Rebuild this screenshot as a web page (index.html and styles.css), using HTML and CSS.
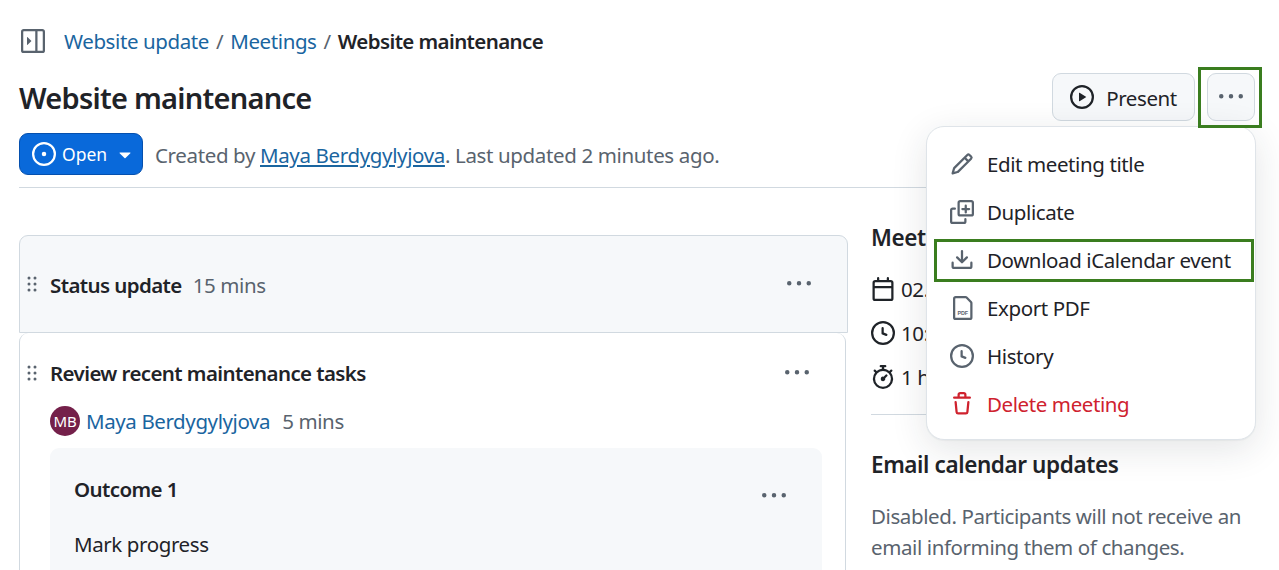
FILE: index.html
```html
<!DOCTYPE html>
<html lang="en">
<head>
  <meta charset="UTF-8">
  <title>Website maintenance</title>
  <link rel="stylesheet" href="styles.css">
</head>
<body>
  <svg class="sprites" width="0" height="0">
    <symbol id="i-sidebar" viewBox="0 0 16 16"><path d="M6.823 7.823a.25.25 0 0 1 0 .354l-2.396 2.396A.25.25 0 0 1 4 10.396V5.604a.25.25 0 0 1 .427-.177Z"/><path d="M1.75 0h12.5C15.216 0 16 .784 16 1.75v12.5A1.75 1.75 0 0 1 14.25 16H1.75A1.75 1.75 0 0 1 0 14.25V1.75C0 .784.784 0 1.75 0ZM1.5 1.75v12.5c0 .138.112.25.25.25H9.5v-13H1.75a.25.25 0 0 0-.25.25ZM11 14.5h3.25a.25.25 0 0 0 .25-.25V1.75a.25.25 0 0 0-.25-.25H11Z"/></symbol>
    <symbol id="i-open" viewBox="0 0 16 16"><path d="M8 9.5a1.5 1.5 0 1 0 0-3 1.5 1.5 0 0 0 0 3Z"/><path d="M8 0a8 8 0 1 1 0 16A8 8 0 0 1 8 0ZM1.5 8a6.5 6.5 0 1 0 13 0 6.5 6.5 0 0 0-13 0Z"/></symbol>
    <symbol id="i-caret" viewBox="0 0 16 16"><path d="m4.427 7.427 3.396 3.396a.25.25 0 0 0 .354 0l3.396-3.396A.25.25 0 0 0 11.396 7H4.604a.25.25 0 0 0-.177.427Z"/></symbol>
    <symbol id="i-play" viewBox="0 0 16 16"><path d="M8 0a8 8 0 1 1 0 16A8 8 0 0 1 8 0ZM1.5 8a6.5 6.5 0 1 0 13 0 6.5 6.5 0 0 0-13 0Zm4.879-2.773 4.264 2.559a.25.25 0 0 1 0 .428l-4.264 2.559A.25.25 0 0 1 6 10.559V5.442a.25.25 0 0 1 .379-.215Z"/></symbol>
    <symbol id="i-kebab" viewBox="0 0 16 16"><path d="M8 9a1.5 1.5 0 1 0 0-3 1.5 1.5 0 0 0 0 3ZM1.5 9a1.5 1.5 0 1 0 0-3 1.5 1.5 0 0 0 0 3Zm13 0a1.5 1.5 0 1 0 0-3 1.5 1.5 0 0 0 0 3Z"/></symbol>
    <symbol id="i-grab" viewBox="0 0 16 16"><path d="M10 13a1 1 0 1 1 0-2 1 1 0 0 1 0 2Zm0-4a1 1 0 1 1 0-2 1 1 0 0 1 0 2Zm-4 4a1 1 0 1 1 0-2 1 1 0 0 1 0 2Zm5-9a1 1 0 1 1-2 0 1 1 0 0 1 2 0ZM7 8a1 1 0 1 1-2 0 1 1 0 0 1 2 0ZM6 5a1 1 0 1 1 0-2 1 1 0 0 1 0 2Z"/></symbol>
    <symbol id="i-pencil" viewBox="0 0 16 16"><path d="M11.013 1.427a1.75 1.75 0 0 1 2.474 0l1.086 1.086a1.75 1.75 0 0 1 0 2.474l-8.61 8.61c-.21.21-.47.364-.756.445l-3.251.93a.75.75 0 0 1-.927-.928l.929-3.25c.081-.286.235-.547.445-.758l8.61-8.61Zm.176 4.823L9.75 4.81l-6.286 6.287a.253.253 0 0 0-.064.108l-.558 1.953 1.953-.558a.253.253 0 0 0 .108-.064Zm1.238-3.763a.25.25 0 0 0-.354 0L10.811 3.75l1.439 1.44 1.263-1.263a.25.25 0 0 0 0-.354Z"/></symbol>
    <symbol id="i-duplicate" viewBox="0 0 16 16"><path d="M0 6.75C0 5.784.784 5 1.75 5h1.5a.75.75 0 0 1 0 1.5h-1.5a.25.25 0 0 0-.25.25v7.5c0 .138.112.25.25.25h7.5a.25.25 0 0 0 .25-.25v-1.5a.75.75 0 0 1 1.5 0v1.5A1.75 1.75 0 0 1 9.25 16h-7.5A1.75 1.75 0 0 1 0 14.25Z"/><path d="M5 1.75C5 .784 5.784 0 6.75 0h7.5C15.216 0 16 .784 16 1.75v7.5A1.75 1.75 0 0 1 14.25 11h-7.5A1.75 1.75 0 0 1 5 9.25Zm1.75-.25a.25.25 0 0 0-.25.25v7.5c0 .138.112.25.25.25h7.5a.25.25 0 0 0 .25-.25v-7.5a.25.25 0 0 0-.25-.25Z"/><path d="M10.5 3a.75.75 0 0 1 .75.75v1.5h1.5a.75.75 0 0 1 0 1.5h-1.5v1.5a.75.75 0 0 1-1.5 0v-1.5h-1.5a.75.75 0 0 1 0-1.5h1.5v-1.5A.75.75 0 0 1 10.5 3Z"/></symbol>
    <symbol id="i-download" viewBox="0 0 16 16"><path d="M2.75 14A1.75 1.75 0 0 1 1 12.25v-2.5a.75.75 0 0 1 1.5 0v2.5c0 .138.112.25.25.25h10.5a.25.25 0 0 0 .25-.25v-2.5a.75.75 0 0 1 1.5 0v2.5A1.75 1.75 0 0 1 13.25 14Z"/><path d="M7.25 7.689V2a.75.75 0 0 1 1.5 0v5.689l1.97-1.969a.749.749 0 1 1 1.06 1.06l-3.25 3.25a.749.749 0 0 1-1.06 0L4.22 6.78a.749.749 0 1 1 1.06-1.06l1.97 1.969Z"/></symbol>
    <symbol id="i-pdf" viewBox="0 0 16 16"><path d="M2 1.75C2 .784 2.784 0 3.75 0h6.6c.46 0 .9.18 1.23.51l2.91 2.91c.33.33.51.77.51 1.24v9.59A1.75 1.75 0 0 1 13.25 16h-9.5A1.75 1.75 0 0 1 2 14.25Zm1.75-.25a.25.25 0 0 0-.25.25v12.5c0 .138.112.25.25.25h9.5a.25.25 0 0 0 .25-.25V4.66a.25.25 0 0 0-.07-.18l-2.91-2.91a.25.25 0 0 0-.18-.07Z"/></symbol>
    <symbol id="i-clock" viewBox="0 0 16 16"><path d="M8 0a8 8 0 1 1 0 16A8 8 0 0 1 8 0ZM1.5 8a6.5 6.5 0 1 0 13 0 6.5 6.5 0 0 0-13 0Zm7-3.25v2.992l2.028.812a.75.75 0 0 1-.557 1.392l-2.5-1A.751.751 0 0 1 7 8.25v-3.5a.75.75 0 0 1 1.5 0Z"/></symbol>
    <symbol id="i-trash" viewBox="0 0 16 16"><path d="M11 1.75V3h2.25a.75.75 0 0 1 0 1.5H2.75a.75.75 0 0 1 0-1.5H5V1.75C5 .784 5.784 0 6.75 0h2.5C10.216 0 11 .784 11 1.75ZM4.496 6.675l.66 6.6a.25.25 0 0 0 .249.225h5.19a.25.25 0 0 0 .249-.225l.66-6.6a.75.75 0 0 1 1.492.149l-.66 6.6A1.748 1.748 0 0 1 10.595 15h-5.19a1.75 1.75 0 0 1-1.741-1.575l-.66-6.6a.75.75 0 1 1 1.492-.15ZM6.5 1.75V3h3V1.75a.25.25 0 0 0-.25-.25h-2.5a.25.25 0 0 0-.25.25Z"/></symbol>
    <symbol id="i-calendar" viewBox="0 0 16 16"><path d="M4.75 0a.75.75 0 0 1 .75.75V2h5V.75a.75.75 0 0 1 1.5 0V2h1.25c.966 0 1.75.784 1.75 1.75v10.5A1.75 1.75 0 0 1 13.25 16H2.75A1.75 1.75 0 0 1 1 14.25V3.75C1 2.784 1.784 2 2.75 2H4V.75A.75.75 0 0 1 4.75 0ZM2.5 7.5v6.75c0 .138.112.25.25.25h10.5a.25.25 0 0 0 .25-.25V7.5Zm10.75-4H2.75a.25.25 0 0 0-.25.25V6h11V3.75a.25.25 0 0 0-.25-.25Z"/></symbol>
    <symbol id="i-stopwatch" viewBox="0 0 16 16"><path d="M5.75.75A.75.75 0 0 1 6.5 0h3a.75.75 0 0 1 0 1.5h-.75v1l-.001.041a6.724 6.724 0 0 1 3.464 1.435l.007-.006.75-.75a.75.75 0 1 1 1.06 1.06l-.75.75-.006.007a6.75 6.75 0 1 1-10.548 0L2.72 5.03l-.75-.75a.75.75 0 0 1 1.06-1.06l.75.75.007.006A6.72 6.72 0 0 1 7.25 2.541V1.5H6.5a.75.75 0 0 1-.75-.75ZM8 14.5a5.25 5.25 0 1 0-.001-10.501A5.25 5.25 0 0 0 8 14.5Zm.389-6.7 1.33-1.33a.75.75 0 1 1 1.061 1.06L9.45 8.861A1.503 1.503 0 0 1 8 10.75a1.499 1.499 0 1 1 .389-2.95Z"/></symbol>
  </svg>

  <div class="page">
    <nav class="crumbs">
      <svg class="icon icon-lg muted"><use href="#i-sidebar"/></svg>
      <div class="crumb-list">
        <a href="#">Website update</a><span class="sep">/</span><a href="#">Meetings</a><span class="sep">/</span><b>Website maintenance</b>
      </div>
    </nav>

    <header class="title-row">
      <h1>Website maintenance</h1>
      <div class="actions">
        <button class="btn btn-present"><svg class="icon icon-lg"><use href="#i-play"/></svg><span>Present</span></button>
        <button class="btn btn-more"><svg class="icon icon-lg muted"><use href="#i-kebab"/></svg></button>
      </div>
    </header>

    <div class="status-row">
      <button class="btn-open"><svg class="icon icon-lg"><use href="#i-open"/></svg>Open<svg class="icon icon-lg"><use href="#i-caret"/></svg></button>
      <p>Created by <a class="underline" href="#">Maya Berdygylyjova</a>. Last updated 2 minutes ago.</p>
    </div>

    <main class="content">
      <section class="agenda">
        <div class="section-head">
          <svg class="icon grab"><use href="#i-grab"/></svg>
          <b>Status update</b><span class="muted-text">15 mins</span>
          <svg class="icon icon-lg muted more"><use href="#i-kebab"/></svg>
        </div>
        <div class="topic">
          <div class="topic-head">
            <svg class="icon grab"><use href="#i-grab"/></svg>
            <b>Review recent maintenance tasks</b>
            <svg class="icon icon-lg muted more"><use href="#i-kebab"/></svg>
          </div>
          <div class="owner">
            <span class="avatar">MB</span><a href="#">Maya Berdygylyjova</a><span class="muted-text">5 mins</span>
          </div>
          <div class="outcome">
            <div class="outcome-head">
              <b>Outcome 1</b>
              <svg class="icon icon-lg muted"><use href="#i-kebab"/></svg>
            </div>
            <p>Mark progress</p>
          </div>
        </div>
      </section>

      <aside class="side">
        <h2>Meeting details</h2>
        <ul class="details">
          <li><svg class="icon icon-lg"><use href="#i-calendar"/></svg>02.10.2025</li>
          <li><svg class="icon icon-lg"><use href="#i-clock"/></svg>10:00</li>
          <li><svg class="icon icon-lg"><use href="#i-stopwatch"/></svg>1 hour</li>
        </ul>
        <hr>
        <h2>Email calendar updates</h2>
        <p class="muted-text">Disabled. Participants will not receive an email informing them of changes.</p>
      </aside>
    </main>

    <div class="menu">
      <a class="menu-item" href="#"><svg class="icon icon-lg muted"><use href="#i-pencil"/></svg>Edit meeting title</a>
      <a class="menu-item" href="#"><svg class="icon icon-lg muted"><use href="#i-duplicate"/></svg>Duplicate</a>
      <a class="menu-item" href="#"><svg class="icon icon-lg muted"><use href="#i-download"/></svg>Download iCalendar event</a>
      <a class="menu-item" href="#"><svg class="icon icon-lg muted" viewBox="0 0 16 16"><use href="#i-pdf" width="16" height="16"/><text class="pdf-mark" x="8.5" y="12.6">PDF</text></svg>Export PDF</a>
      <a class="menu-item" href="#"><svg class="icon icon-lg muted"><use href="#i-clock"/></svg>History</a>
      <a class="menu-item danger" href="#"><svg class="icon icon-lg"><use href="#i-trash"/></svg>Delete meeting</a>
    </div>

    <div class="callout callout-more"></div>
    <div class="callout callout-download"></div>
  </div>
</body>
</html>
```

FILE: styles.css
```css
* {
  box-sizing: border-box;
}
html, body {
  margin: 0;
  height: 570px;
  overflow: hidden;
}
body {
  font-family: "Noto Sans", "Open Sans", sans-serif;
  font-size: 20.5px;
  letter-spacing: -0.4px;
  color: #1f2328;
  background: #fff;
}
a {
  color: #1a659f;
  text-decoration: none;
}
b, h1, h2 {
  font-weight: 600;
  letter-spacing: -0.6px;
}
p {
  margin: 0;
}
button {
  font: inherit;
  letter-spacing: inherit;
}
.sprites {
  position: absolute;
}
.icon {
  width: 16px;
  height: 16px;
  fill: currentColor;
  flex: none;
}
.icon-lg {
  width: 24px;
  height: 24px;
}
.muted {
  color: #59636e;
}
.muted-text {
  color: #59636e;
}
.pdf-mark {
  font-family: "Liberation Sans", sans-serif;
  font-size: 3.6px;
  font-weight: 700;
  letter-spacing: 0;
  text-anchor: middle;
}

.page {
  position: relative;
  height: 570px;
  overflow: hidden;
  padding: 29px 24px 0 19px;
}
.crumbs {
  display: flex;
  align-items: center;
  height: 24px;
  padding-left: 2px;
}
.crumb-list {
  margin-left: 19px;
  display: flex;
  align-items: center;
}
.sep {
  color: #59636e;
  margin: 0 7px;
}

.title-row {
  display: flex;
  align-items: center;
  justify-content: space-between;
  margin-top: 20px;
  height: 48px;
}
h1 {
  margin: 1px 0 0;
  font-size: 29px;
  letter-spacing: -0.75px;
}
.actions {
  display: flex;
  gap: 12px;
}
.btn {
  display: flex;
  align-items: center;
  justify-content: center;
  height: 48px;
  background: #f6f8fa;
  border: 1px solid #d1d9e0;
  border-radius: 9px;
  color: #1f2328;
}
.btn span {
  margin-top: 2px;
}
.btn-present {
  width: 143px;
  gap: 12px;
}
.btn-more {
  width: 48px;
  padding: 0;
}

.status-row {
  display: flex;
  align-items: center;
  gap: 12px;
  margin-top: 12px;
  height: 42px;
  color: #59636e;
}
.status-row p {
  margin-top: 2px;
  letter-spacing: -0.36px;
}
.btn-open {
  display: flex;
  align-items: center;
  width: 124px;
  height: 42px;
  padding: 0 0 0 12px;
  gap: 6px;
  color: #fff;
  background: #0969da;
  border: 1px solid #0550ae;
  border-radius: 9px;
  font-size: 17.5px;
  letter-spacing: 0;
}
.underline {
  text-decoration: underline;
}

.content {
  display: flex;
  margin-top: 12px;
  padding-top: 47px;
  gap: 23px;
  border-top: 1px solid #d1d9e0;
}
.agenda {
  width: 829px;
  flex: none;
}
.section-head {
  display: flex;
  align-items: center;
  height: 98px;
  padding: 0 36px 0 0;
  background: #f6f8fa;
  border: 1px solid #d1d9e0;
  border-radius: 9px 9px 0 0;
}
.grab {
  width: 24px;
  height: 24px;
  color: #59636e;
  margin-right: 6px;
}
.section-head b, .section-head .muted-text {
  margin-top: 2px;
}
.section-head .muted-text {
  margin-left: 11px;
}
.more {
  margin-left: auto;
}
.topic {
  margin-right: 2px;
  padding: 28px 23px 0 0;
  height: 300px;
  border: 1px solid #d1d9e0;
  border-top: 0;
  border-radius: 9px 9px 0 0;
}
.topic-head {
  display: flex;
  align-items: center;
  height: 24px;
  padding-right: 13px;
}
.owner {
  display: flex;
  align-items: center;
  height: 30px;
  margin-top: 21px;
  margin-left: 30px;
}
.avatar {
  display: flex;
  align-items: center;
  justify-content: center;
  width: 30px;
  height: 30px;
  border-radius: 50%;
  background: #74204a;
  color: #fff;
  font-size: 15px;
  letter-spacing: -0.3px;
  margin-right: 6px;
}
.owner .muted-text {
  margin-left: 12px;
}
.outcome {
  margin: 12px 0 0 30px;
  padding: 27px 36px 0 24px;
  height: 200px;
  background: #f6f8fa;
  border-radius: 9px;
}
.outcome-head {
  display: flex;
  align-items: flex-start;
  justify-content: space-between;
  height: 30px;
}
.outcome-head .icon {
  margin-top: 9px;
}
.outcome p {
  margin-top: 25px;
}

.side {
  flex: 1;
  margin-top: -12px;
}
h2 {
  margin: 0;
  font-size: 22.5px;
  letter-spacing: -0.4px;
  line-height: 30px;
}
.details {
  list-style: none;
  margin: 24px 0 0;
  padding: 0;
}
.details li {
  display: flex;
  align-items: center;
  gap: 6px;
  height: 24px;
  margin-bottom: 20px;
}
.side hr {
  border: 0;
  border-top: 1px solid #d1d9e0;
  margin: 25px 0 35px;
}
.side .muted-text {
  margin-top: 21px;
  line-height: 31px;
}

/* dropdown over the page */
.menu {
  position: absolute;
  left: 926px;
  top: 126px;
  width: 330px;
  height: 314px;
  padding: 13px 8px;
  background: #fff;
  border: 1px solid #dfe4e9;
  border-radius: 18px;
  box-shadow: 0 1px 1px rgba(37, 41, 46, 0.04), 0 9px 36px rgba(37, 41, 46, 0.12);
}
.menu-item {
  display: flex;
  align-items: center;
  gap: 13px;
  height: 48px;
  padding-left: 15px;
  color: #1f2328;
}
.danger {
  color: #cf222e;
}

/* green boxes drawn on the screenshot */
.callout {
  position: absolute;
  border: 3px solid #3a7d1f;
}
.callout-more {
  left: 1198px;
  top: 67px;
  width: 64px;
  height: 61px;
}
.callout-download {
  left: 934px;
  top: 239px;
  width: 320px;
  height: 43px;
}
```
